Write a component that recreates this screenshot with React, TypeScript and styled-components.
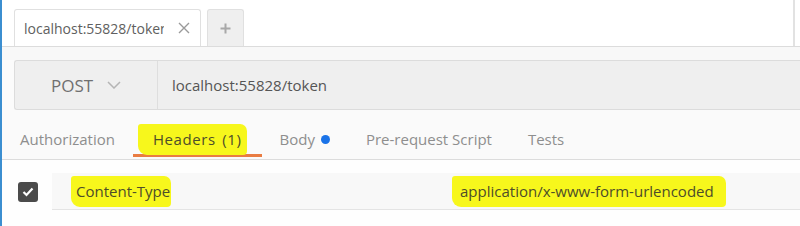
import React from "react";
import styled, { createGlobalStyle } from "styled-components";

const Global = createGlobalStyle`
  html, body { margin: 0; padding: 0; background: #fff; }
  body { font-family: "Open Sans", "Noto Sans", sans-serif; }
`;

const Frame = styled.div`
  width: 798px;
  height: 226px;
  border-left: 2px solid #3b8ed0;
  overflow: hidden;
  display: flex;
  flex-direction: column;
  background: #fbfbfb;
`;

const TabStrip = styled.div`
  height: 46px;
  flex: none;
  background: #fff;
  border-bottom: 1px solid #dcdcdc;
  display: flex;
  align-items: flex-end;
  gap: 6px;
  padding-left: 12px;
`;

const Tab = styled.div`
  width: 187px;
  height: 37px;
  box-sizing: border-box;
  border: 1px solid #e0e0e0;
  border-bottom: none;
  border-radius: 3px 3px 0 0;
  background: #fff;
  display: flex;
  align-items: center;
  justify-content: space-between;
  padding: 0 10px 0 9px;
  color: #606060;
  font-size: 14px;
`;

const TabTitle = styled.span`
  white-space: nowrap;
  overflow: hidden;
  text-overflow: clip;
  width: 140px;
`;

const NewTab = styled.div`
  width: 37px;
  height: 37px;
  box-sizing: border-box;
  border: 1px solid #e0e0e0;
  border-bottom: none;
  border-radius: 3px 3px 0 0;
  background: #efefef;
  display: flex;
  align-items: center;
  justify-content: center;
`;

const StripSpacer = styled.div`
  flex: 1;
  align-self: stretch;
  margin-right: 5px;
  border-right: 2px solid #e2e2e2;
`;

const Band = styled.div`
  height: 13px;
  flex: none;
  background: #f8f8f8;
`;

const UrlBar = styled.div`
  height: 50px;
  flex: none;
  box-sizing: border-box;
  margin-left: 12px;
  border: 1px solid #dcdcdc;
  border-right: none;
  border-radius: 3px 0 0 3px;
  background: #efefef;
  display: flex;
  align-items: stretch;
`;

const Method = styled.div`
  width: 143px;
  box-sizing: border-box;
  border-right: 1px solid #dedede;
  display: flex;
  align-items: center;
  padding-left: 36px;
  gap: 14px;
  color: #707070;
  font-size: 17px;
`;

const Url = styled.div`
  display: flex;
  align-items: center;
  padding-left: 14px;
  color: #555;
  font-size: 15px;
`;

const TabsRow = styled.div`
  height: 50px;
  flex: none;
  box-sizing: border-box;
  border-bottom: 1px solid #dcdcdc;
  display: flex;
  align-items: stretch;
  background: #fafafa;
`;

const ReqTab = styled.div<{ $active?: boolean }>`
  display: flex;
  align-items: center;
  gap: 6px;
  padding: 14px ${(p) => (p.$active ? 20 : 18)}px 0;
  font-size: 15px;
  letter-spacing: ${(p) => (p.$active ? "0.6px" : "normal")};
  word-spacing: ${(p) => (p.$active ? "2px" : "normal")};
  color: ${(p) => (p.$active ? "#555" : "#8e8e8e")};
  border-bottom: 3px solid ${(p) => (p.$active ? "#e97c42" : "transparent")};
  margin-bottom: 2px;
`;

const Mark = styled.span<{ $pl?: number; $pr?: number }>`
  background: #f7f71c;
  color: #4d4d2a;
  padding: 5px ${(p) => p.$pr ?? 5}px 6px ${(p) => p.$pl ?? 5}px;
  margin: 0 ${(p) => -(p.$pr ?? 5)}px 0 ${(p) => -(p.$pl ?? 5)}px;
  border-radius: 3px 7px 4px 9px;
`;

const Dot = styled.span`
  width: 9px;
  height: 9px;
  border-radius: 50%;
  background: #1a73e8;
`;

const Body = styled.div`
  flex: 1;
  background: #fefefe;
  padding-top: 13px;
`;

const HeaderRow = styled.div`
  display: flex;
  align-items: center;
  height: 37px;
`;

const CheckCell = styled.div`
  width: 48px;
  display: flex;
  justify-content: center;
  padding-left: 2px;
`;

const Check = styled.div`
  width: 20px;
  height: 20px;
  border-radius: 3px;
  background: #4b4b4b;
  display: flex;
  align-items: center;
  justify-content: center;
`;

const Fields = styled.div`
  flex: 1;
  align-self: stretch;
  background: #f8f8f8;
  border-bottom: 1px solid #e4e4e4;
  display: grid;
  grid-template-columns: 400px 1fr;
  align-items: center;
  font-size: 15px;
`;

const Cell = styled.div<{ $pl: number }>`
  padding-left: ${(p) => p.$pl}px;
`;

export default function App() {
  return (
    <>
      <Global />
      <Frame>
        <TabStrip>
          <Tab>
            <TabTitle>localhost:55828/token</TabTitle>
            <svg width="12" height="12" viewBox="0 0 12 12">
              <path d="M1 1L11 11M11 1L1 11" stroke="#9a9a9a" strokeWidth="1.4" />
            </svg>
          </Tab>
          <NewTab>
            <svg width="11" height="11" viewBox="0 0 11 11">
              <path d="M5.5 0.5V10.5M0.5 5.5H10.5" stroke="#a8a8a8" strokeWidth="2" />
            </svg>
          </NewTab>
          <StripSpacer />
        </TabStrip>
        <Band />
        <UrlBar>
          <Method>
            POST
            <svg width="14" height="8" viewBox="0 0 14 8">
              <path d="M1 1L7 7L13 1" stroke="#b5b5b5" strokeWidth="1.5" fill="none" />
            </svg>
          </Method>
          <Url>localhost:55828/token</Url>
        </UrlBar>
        <TabsRow>
          <ReqTab>Authorization</ReqTab>
          <ReqTab $active>
            <Mark $pl={15} $pr={5}>Headers (1)</Mark>
          </ReqTab>
          <ReqTab>
            Body <Dot />
          </ReqTab>
          <ReqTab>Pre-request Script</ReqTab>
          <ReqTab>Tests</ReqTab>
        </TabsRow>
        <Body>
          <HeaderRow>
            <CheckCell>
              <Check>
                <svg width="12" height="10" viewBox="0 0 12 10">
                  <path d="M1.5 5L4.5 8L10.5 1.5" stroke="#fff" strokeWidth="2.2" fill="none" />
                </svg>
              </Check>
            </CheckCell>
            <Fields>
              <Cell $pl={24}>
                <Mark $pl={5} $pr={1}>Content-Type</Mark>
              </Cell>
              <Cell $pl={8}>
                <Mark $pl={8} $pr={12}>application/x-www-form-urlencoded</Mark>
              </Cell>
            </Fields>
          </HeaderRow>
        </Body>
      </Frame>
    </>
  );
}
